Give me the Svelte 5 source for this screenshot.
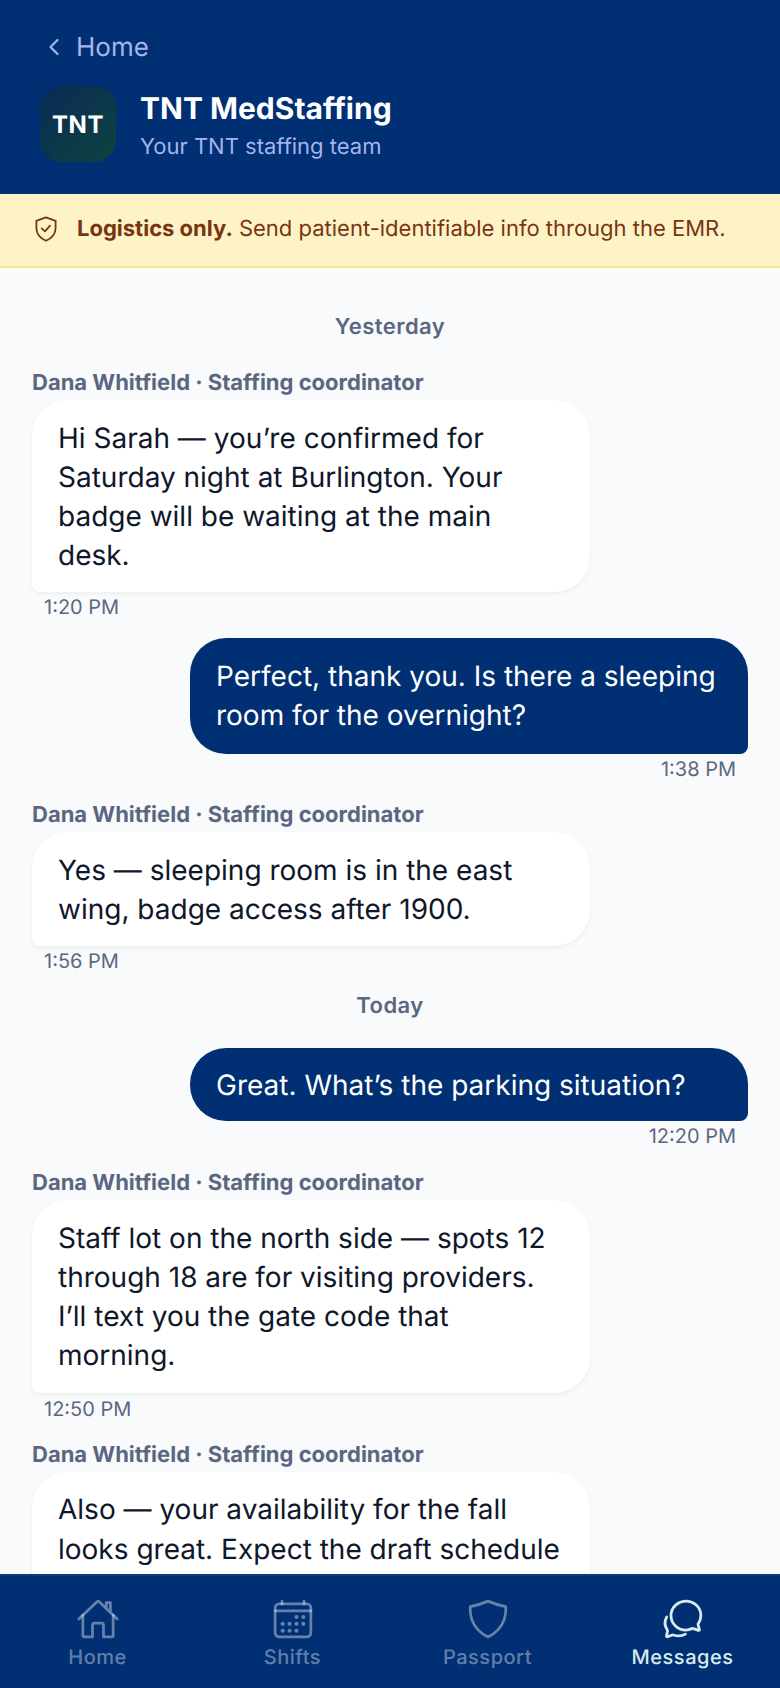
<script>
  const tabs = ['Home', 'Shifts', 'Passport', 'Messages'];
  const dots = [[296,232],[376,232],[136,312],[216,312],[296,312],[376,312],[136,392],[216,392],[296,392]];
  const items = [
    { day: 'Yesterday', first: true },
    { who: 'them', text: 'Hi Sarah — you’re confirmed for Saturday night at Burlington. Your badge will be waiting at the main desk.', time: '1:20 PM' },
    { who: 'me', text: 'Perfect, thank you. Is there a sleeping room for the overnight?', time: '1:38 PM' },
    { who: 'them', text: 'Yes — sleeping room is in the east wing, badge access after 1900.', time: '1:56 PM' },
    { day: 'Today' },
    { who: 'me', short: true, text: 'Great. What’s the parking situation?', time: '12:20 PM' },
    { who: 'them', tall: true, text: 'Staff lot on the north side — spots 12 through 18 are for visiting providers. I’ll text you the gate code that morning.', time: '12:50 PM' },
    { who: 'them', text: 'Also — your availability for the fall looks great. Expect the draft schedule by Friday.', time: '1:05 PM' }
  ];
</script>

<div class="page">
  <header class="header">
    <div class="back">
      <svg class="chev" width="24" height="24" viewBox="0 0 24 24" fill="none" stroke="currentColor" stroke-width="2.2" stroke-linecap="round" stroke-linejoin="round"><path d="M15.5 5L8.5 12l7 7"/></svg>
      <span>Home</span>
    </div>
    <div class="brand">
      <div class="logo">TNT</div>
      <div class="brand-text">
        <div class="title">TNT MedStaffing</div>
        <div class="sub">Your TNT staffing team</div>
      </div>
    </div>
  </header>

  <div class="banner">
    <svg width="28" height="28" viewBox="0 0 28 28" fill="none" stroke="currentColor" stroke-width="1.8" stroke-linecap="round" stroke-linejoin="round"><path d="M14 2.4L23.6 5.8V13C23.6 19.5 18.5 23.8 14 25.8C9.5 23.8 4.4 19.5 4.4 13V5.8Z"/><path d="M9.7 13.3L13 16.3L18 10.7"/></svg>
    <p><strong>Logistics only.</strong> Send patient-identifiable info through the EMR.</p>
  </div>

  <main class="thread">
    {#each items as m}
      {#if m.day}
        <div class="day" class:first={m.first}>{m.day}</div>
      {:else}
        <div class="msg {m.who}" class:short={m.short} class:tall={m.tall}>
          {#if m.who === 'them'}<div class="name">Dana Whitfield · Staffing coordinator</div>{/if}
          <div class="bubble">{m.text}</div>
          <div class="time">{m.time}</div>
        </div>
      {/if}
    {/each}
  </main>

  <nav class="nav">
    {#each tabs as t}
      <div class="tab" class:active={t === 'Messages'}>
        {#if t === 'Home'}
          <svg width="44" height="44" viewBox="0 0 512 512" fill="none" stroke="currentColor" stroke-width="32" stroke-linecap="round" stroke-linejoin="round"><path d="M80 212v236a16 16 0 0016 16h96V328a24 24 0 0124-24h80a24 24 0 0124 24v136h96a16 16 0 0016-16V212"/><path d="M480 256L266.89 52c-5-5.28-13.69-5.34-18.78 0L32 256M400 179V64h-48v69"/></svg>
        {:else if t === 'Shifts'}
          <svg width="44" height="44" viewBox="0 0 512 512" fill="none" stroke="currentColor" stroke-width="32" stroke-linecap="round" stroke-linejoin="round"><rect x="48" y="80" width="416" height="384" rx="48"/>
            {#each dots as d}<circle cx={d[0]} cy={d[1]} r="24" fill="currentColor" stroke="none"/>{/each}
            <path d="M128 48v32M384 48v32M464 160H48"/>
          </svg>
        {:else if t === 'Passport'}
          <svg width="44" height="44" viewBox="0 0 512 512" fill="none" stroke="currentColor" stroke-width="32" stroke-linecap="round" stroke-linejoin="round"><path d="M463.1 112.37C373.68 96.33 336.71 84.45 256 48c-80.71 36.45-117.68 48.33-207.1 64.37C32.7 369.13 240.58 457.79 256 464c15.42-6.21 223.3-94.87 207.1-351.63z"/></svg>
        {:else}
          <svg width="44" height="44" viewBox="0 0 512 512" fill="none" stroke="currentColor" stroke-width="32" stroke-linecap="round" stroke-miterlimit="10"><path d="M431 320.6c-1-3.6 1.2-8.6 3.3-12.2a33.68 33.68 0 012.1-3.1A162 162 0 00464 215c.3-92.2-77.5-167-173.7-167-83.9 0-153.9 57.1-170.3 132.9a160.7 160.7 0 00-3.7 34.2c0 92.3 74.8 169.1 171 169.1 15.3 0 35.9-4.6 47.2-7.7s22.5-7.2 25.4-8.3a26.44 26.44 0 019.3-1.7 26 26 0 0110.1 2l56.7 20.1a13.52 13.52 0 003.9 1 8 8 0 008-8 12.85 12.85 0 00-.5-2.7z"/><path d="M66.46 232a146.23 146.23 0 006.39 152.67c2.31 3.49 3.61 6.19 3.21 8s-11.93 61.87-11.93 61.87a8 8 0 002.71 7.68A8.17 8.17 0 0072 464a7.26 7.26 0 002.91-.6l56.21-22a15.7 15.7 0 0112 .2c18.94 7.38 39.88 12 60.83 12A159.21 159.21 0 00284 432.11"/></svg>
        {/if}
        <span>{t}</span>
      </div>
    {/each}
  </nav>
</div>

<style>
  :global(body) { margin: 0; }
  .page {
    width: 780px; height: 1688px; overflow: hidden;
    display: flex; flex-direction: column;
    background: #f8fafc;
    font-family: Inter, "Liberation Sans", sans-serif;
    text-rendering: geometricPrecision;
  }
  .header { background: #002f73; height: 194px; box-sizing: border-box; padding: 32px 40px 0; flex: none; }
  .back { display: flex; align-items: center; gap: 10px; color: #a5b4ec; font-size: 26px; line-height: 32px; padding-left: 2px; }
  .chev { margin-top: -2px; }
  .brand { display: flex; align-items: center; gap: 24px; margin-top: 22px; }
  .logo {
    width: 76px; height: 76px; border-radius: 22px; flex: none;
    background: linear-gradient(135deg, #0a2a55, #0e4340);
    color: #fff; font-weight: 700; font-size: 24px; letter-spacing: 0.5px;
    display: flex; align-items: center; justify-content: center;
  }
  .brand-text { margin-top: 3px; }
  .title { color: #fff; font-size: 30px; font-weight: 700; line-height: 38px; margin-bottom: 4px; }
  .sub { color: #a5b4ec; font-size: 22px; line-height: 30px; }
  .banner {
    flex: none; height: 74px; box-sizing: border-box; background: #fef3c7; border-bottom: 2px solid #fde68a;
    display: flex; align-items: center; gap: 17px; padding: 0 32px 3px; color: #78350f;
  }
  .banner p { margin: 0; font-size: 22px; }
  .banner strong { font-weight: 700; }
  .thread { flex: 1; min-height: 0; overflow: hidden; padding: 0 32px; display: flex; flex-direction: column; }
  .day { text-align: center; color: #5b6780; font-size: 22px; font-weight: 600; line-height: 30px; letter-spacing: .44px; margin: -.4px 0 26.4px; flex: none; }
  .day.first { margin: 44px 0 27px; }
  .msg { display: flex; flex-direction: column; flex: none; margin-bottom: 17px; }
  .msg.me { align-items: flex-end; margin-bottom: 18.2px; }
  .msg.short { margin-bottom: 18.3px; }
  .msg.tall { margin-bottom: 17.6px; }
  .name { color: #5b6780; font-size: 22px; font-weight: 700; line-height: 28px; margin-bottom: 3px; }
  .bubble {
    width: 558px; box-sizing: border-box; padding: 18.8px 26px 16.4px; font-size: 28px; line-height: 39.2px;
    background: #fff; color: #0f172a; border-radius: 36px 36px 36px 8px;
    box-shadow: 0 2px 4px rgba(15,23,42,.05);
  }
  .me .bubble { background: #002f73; color: #fff; border-radius: 36px 36px 8px 36px; box-shadow: none; padding: 18.6px 26px 19px; }
  .me.short .bubble { padding: 18px 26px 16.5px; }
  .tall .bubble { padding: 19px 26px 17.5px; }
  .time { color: #5b6780; font-size: 20px; line-height: 28px; padding: 0 12px; margin-top: 1px; }
  .tall .time { margin-top: 2px; }
  .nav {
    flex: none; height: 114px; box-sizing: border-box; background: #002f73; border-top: 2px solid #0d3a7d;
    display: grid; grid-template-columns: repeat(4, 1fr); padding-top: 21px;
  }
  .tab { display: flex; flex-direction: column; align-items: center; color: rgba(255,255,255,.4); font-size: 20px; letter-spacing: .5px; font-weight: 500; }
  .tab svg { display: block; }
  .tab span { line-height: 26px; margin-top: 3px; }
  .tab.active { color: #d8ebee; }
</style>
